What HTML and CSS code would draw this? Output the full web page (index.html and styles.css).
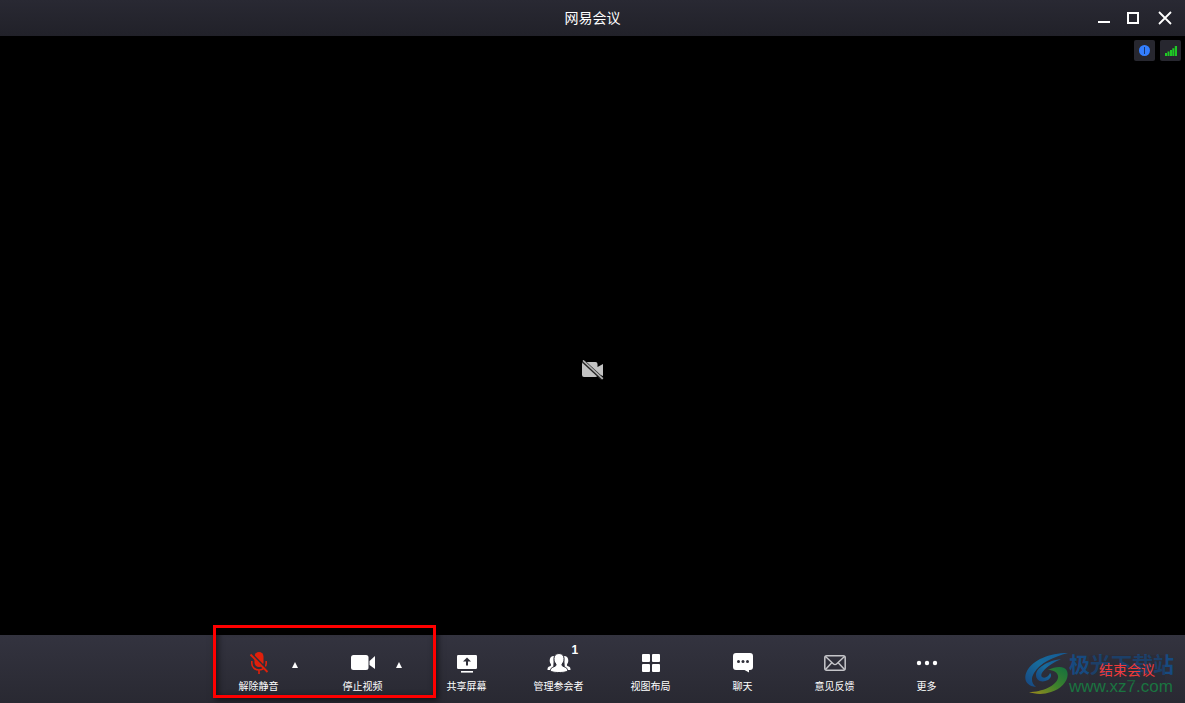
FILE: index.html
```html
<!DOCTYPE html>
<html lang="zh-CN">
<head>
<meta charset="utf-8">
<title>网易会议</title>
<link rel="stylesheet" href="styles.css">
</head>
<body>
<div class="app">
  <header class="titlebar">
    <h1 class="title">网易会议</h1>
    <div class="window-controls">
      <button class="win-btn" aria-label="最小化"><svg width="14" height="14" viewBox="0 0 14 14"><path d="M1 10h12v2H1z" fill="#fff"/></svg></button>
      <button class="win-btn" aria-label="最大化"><svg width="14" height="14" viewBox="0 0 14 14"><path d="M2 2h10v10H2z" fill="none" stroke="#fff" stroke-width="2"/></svg></button>
      <button class="win-btn close" aria-label="关闭"><svg width="14" height="14" viewBox="0 0 14 14"><path d="M1 1l12 12M13 1L1 13" stroke="#fff" stroke-width="1.8"/></svg></button>
    </div>
  </header>

  <main class="stage">
    <div class="status">
      <button class="status-btn" aria-label="会议信息"><svg width="11" height="11" viewBox="0 0 11 11"><circle cx="5.5" cy="5.5" r="5.5" fill="#337eff"/><path d="M5 2h1v7H5z" fill="#17366f"/></svg></button>
      <button class="status-btn" aria-label="网络状态"><svg width="12" height="10" viewBox="0 0 12 10"><path d="M0 7h2v3H0zM2.500 5.500h2V10h-2zM5 4h2v6H5zM7.300 2.300h2V10h-2zM9.800 0H12v10H9.800z" fill="#1fc925"/></svg></button>
    </div>
    <svg class="camera-off" width="22" height="20" viewBox="0 0 22 20" role="img" aria-label="摄像头已关闭">
      <path d="M2 2h11.500a2 2 0 0 1 2 2v3L21 4v12l-5.500-2v1a2 2 0 0 1-2 2H2a2 2 0 0 1-2-2V4a2 2 0 0 1 2-2z" fill="#c3c3c3"/>
      <path d="M1.500 1.500l19 17.500" stroke="#222" stroke-width="3.600"/>
      <path d="M1 .5l19.800 18.300" stroke="#b4b4b4" stroke-width="1.600"/>
    </svg>
  </main>

  <footer class="toolbar">
    <div class="tools">
      <div class="devices">
        <div class="device">
          <button class="tool">
            <svg class="icon" width="24" height="24" viewBox="0 0 24 24">
              <g fill="none" stroke="#e0200b" stroke-width="1.600"><path d="M4.800 10v2.500a7.200 6.500 0 0 0 14.400 0V10M12 19v4"/></g>
              <rect x="7.500" y="1" width="9" height="15" rx="4.500" fill="#e0200b"/>
              <path d="M4 2.500L21.500 20.500" stroke="#303039" stroke-width="2.600"/>
              <path d="M3.500 3.500L20.500 21" stroke="#e0200b" stroke-width="1.800"/>
            </svg>
            <span class="label">解除静音</span>
          </button>
          <button class="arrow" aria-label="音频选项"><svg width="6" height="6" viewBox="0 0 6 6"><path d="M3 0l3 6H0z" fill="#fff"/></svg></button>
        </div>
        <div class="device">
          <button class="tool">
            <svg class="icon" width="24" height="24" viewBox="0 0 24 24">
              <rect x="0" y="4" width="17.500" height="15" rx="2.500" fill="#fff"/><path d="M18.500 10L24 5v13l-5.500-4z" fill="#fff"/>
            </svg>
            <span class="label">停止视频</span>
          </button>
          <button class="arrow" aria-label="视频选项"><svg width="6" height="6" viewBox="0 0 6 6"><path d="M3 0l3 6H0z" fill="#fff"/></svg></button>
        </div>
        <div class="highlight"></div>
      </div>
      <button class="tool">
        <svg class="icon" width="24" height="24" viewBox="0 0 24 24">
          <rect x="2" y="4" width="20" height="14" rx="1.200" fill="#fff"/><path d="M6 20h12v1.600H6z" fill="#fff"/>
          <path d="M12 6.500l4 4h-3v4h-2v-4H8z" fill="#2f2f39"/>
        </svg>
        <span class="label">共享屏幕</span>
      </button>
      <button class="tool">
        <svg class="icon" width="24" height="24" viewBox="0 0 24 24">
          <g fill="#fff"><path d="M7 5c-3 0-4.300 2-4.300 4.500 0 1.900.6 2.800 1.300 3.900.4 1.200-.4 1.500-1.800 2.100C.8 16.200.5 17 .5 19H6zM17 5c3 0 4.300 2 4.300 4.500 0 1.900-.6 2.800-1.300 3.900-.4 1.200.4 1.500 1.800 2.100 1.400.7 1.700 1.500 1.700 3.500H18z"/>
          <path d="M12 2.500c-3.300 0-5 2.200-5 5.200 0 2.600.8 4 1.900 5.300.6 1.500-.2 2-2.100 2.800-2.500 1.100-3.300 1.700-3.300 3.700 0 1.400 4 2 8.500 2s8.500-.6 8.500-2c0-2-.8-2.600-3.300-3.700-1.900-.8-2.700-1.300-2.100-2.800C16.200 11.700 17 10.300 17 7.700 17 4.700 15.300 2.500 12 2.500z" stroke="#2f2f39" stroke-width="1"/></g>
        </svg>
        <span class="count">1</span>
        <span class="label">管理参会者</span>
      </button>
      <button class="tool">
        <svg class="icon" width="24" height="24" viewBox="0 0 24 24">
          <g fill="#fff"><rect x="3" y="3" width="8" height="8" rx="1"/><rect x="13" y="3" width="8" height="8" rx="1"/><rect x="3" y="13" width="8" height="8" rx="1"/><rect x="13" y="13" width="8" height="8" rx="1"/></g>
        </svg>
        <span class="label">视图布局</span>
      </button>
      <button class="tool">
        <svg class="icon" width="24" height="24" viewBox="0 0 24 24">
          <path d="M5 2h14a3 3 0 0 1 3 3v11a3 3 0 0 1-3 3h-1v2.500L13.500 19H5a3 3 0 0 1-3-3V5a3 3 0 0 1 3-3z" fill="#fff"/>
          <g fill="#2f2f39"><circle cx="7.500" cy="10.500" r="1.500"/><circle cx="12" cy="10.500" r="1.500"/><circle cx="16.500" cy="10.500" r="1.500"/></g>
        </svg>
        <span class="label">聊天</span>
      </button>
      <button class="tool">
        <svg class="icon" width="24" height="24" viewBox="0 0 24 24">
          <g fill="none" stroke="#c6c6ca" stroke-width="1.500"><rect x="1.800" y="4.800" width="20.400" height="14.400" rx="2"/><path d="M2.500 5.500l8 7.500q1.500 1.200 3 0l8-7.500M2.500 18.500l6-6.500M21.500 18.500l-6-6.500"/></g>
        </svg>
        <span class="label">意见反馈</span>
      </button>
      <button class="tool">
        <svg class="icon" width="24" height="24" viewBox="0 0 24 24"><g fill="#fff"><circle cx="4" cy="12" r="2.200"/><circle cx="12" cy="12" r="2.200"/><circle cx="20" cy="12" r="2.200"/></g></svg>
        <span class="label">更多</span>
      </button>
    </div>

    <div class="watermark">
      <svg class="mark" width="44" height="42" viewBox="0 0 44 42" aria-hidden="true">
        <defs>
          <linearGradient id="blue" x1="1" y1="0" x2="0" y2="1"><stop offset="0" stop-color="#155a96"/><stop offset=".5" stop-color="#176b9c"/><stop offset="1" stop-color="#17457f"/></linearGradient>
          <linearGradient id="green" x1="1" y1="0" x2="0" y2="1"><stop offset="0" stop-color="#14703f"/><stop offset=".5" stop-color="#3d812c"/><stop offset="1" stop-color="#a08c1c"/></linearGradient>
        </defs>
        <path d="M43 1C24 1 8 8 2 19c-4 8-1 15 9 16-5-4-5-9-2-14C15 11 28 5 43 1z" fill="url(#blue)"/>
        <path d="M36 7C22 9 11 16 11 23c0 6 6 8 12 5 3-2 4-5 2-7-1 3-5 6-8 4-3-4 6-12 19-18z" fill="url(#blue)"/>
        <path d="M23 18c8-4 17-4 19 1 3 8-5 18-16 21-8 3-17 2-22 0 13 0 27-6 29-14 1-5-4-8-10-8z" fill="url(#green)"/>
      </svg>
      <div class="brand"><span class="brand-name">极光下载站</span><span class="brand-url">www.xz7.com</span></div>
      <button class="end">结束会议</button>
    </div>
  </footer>
</div>
</body>
</html>
```

FILE: styles.css
```css
* {
  box-sizing: border-box;
}

body {
  margin: 0;
  background: #000;
  color: #fff;
  font-family: "Liberation Sans", "Noto Sans CJK SC", sans-serif;
}

button {
  margin: 0;
  padding: 0;
  border: 0;
  background: none;
  color: inherit;
  font: inherit;
}

svg {
  display: block;
}

.app {
  display: flex;
  flex-direction: column;
  min-height: 100vh;
}

.titlebar {
  display: grid;
  grid-template-columns: 1fr auto 1fr;
  align-items: center;
  height: 36px;
  background: linear-gradient(#292933, #212129);
}

.title {
  grid-column: 2;
  margin: 0;
  font-size: 14px;
  font-weight: 400;
  line-height: 20px;
}

.window-controls {
  display: flex;
  justify-content: flex-end;
  gap: 15px;
  padding-right: 13px;
}

.close {
  margin-left: 3px;
}

.stage {
  flex: 1;
  display: grid;
  grid-template-columns: 1fr auto 1fr;
  align-items: center;
}

.status {
  grid-column: 3;
  grid-row: 1;
  align-self: start;
  display: flex;
  justify-content: flex-end;
  gap: 5px;
  padding: 4px;
}

.status-btn {
  display: grid;
  place-items: center;
  width: 21px;
  height: 21px;
  border-radius: 2px;
  background: #27272f;
}

.camera-off {
  grid-column: 2;
  grid-row: 1;
  margin-top: 68px;
}

.toolbar {
  display: grid;
  grid-template-columns: 1fr auto 1fr;
  height: 68px;
  background: linear-gradient(#33333f, #292932);
}

.tools {
  grid-column: 2;
  display: flex;
}

.devices {
  position: relative;
  display: flex;
}

.device {
  display: flex;
  padding: 0 16px;
}

.tool {
  position: relative;
  display: flex;
  flex-direction: column;
  align-items: center;
  gap: 4px;
  width: 92px;
  padding-top: 16px;
}

.device .tool {
  width: 60px;
}

.label {
  font-size: 10px;
  line-height: 16px;
  white-space: nowrap;
}

.arrow {
  display: grid;
  justify-items: center;
  align-content: start;
  width: 12px;
  padding-top: 27px;
}

.count {
  position: absolute;
  top: 9px;
  left: 59px;
  font-size: 12px;
  font-weight: 700;
  line-height: 12px;
}

.highlight {
  position: absolute;
  inset: -10px -15px 5px 0;
  border: 3px solid #f00;
  box-shadow: 2px 2px 6px rgba(0, 0, 0, 0.6), inset 2px 2px 6px rgba(0, 0, 0, 0.6);
  pointer-events: none;
}

.watermark {
  position: relative;
  justify-self: end;
  align-self: start;
  display: flex;
  padding: 17px 11px 0 0;
}

.brand {
  display: flex;
  flex-direction: column;
  white-space: nowrap;
}

.brand-name {
  color: #174a80;
  font-size: 21px;
  font-weight: 700;
  line-height: 26px;
}

.brand-url {
  color: #1a7440;
  font-size: 17px;
  line-height: 18px;
}

.end {
  position: absolute;
  top: 20px;
  right: 20px;
  width: 76px;
  height: 28px;
  border-radius: 4px;
  background: rgba(40, 40, 49, 0.3);
  color: #f03a3a;
  font-size: 14px;
}
```
